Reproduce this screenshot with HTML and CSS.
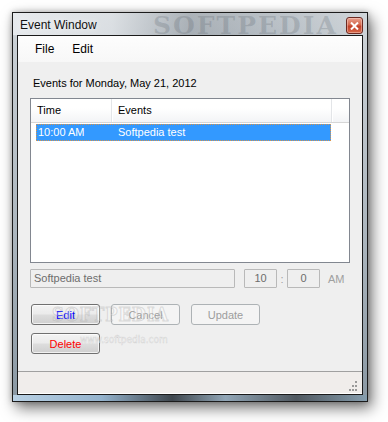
FILE: index.html
```html
<!DOCTYPE html>
<html>
<head>
<meta charset="utf-8">
<link rel="stylesheet" href="styles.css">
</head>
<body>
<div class="desktop">
  <div class="window">
    <div class="titlebar">
      <span class="title">Event Window</span>
      <span class="wm-title">SOFTPEDIA</span>
      <button class="close" aria-label="Close">
        <svg width="9" height="8" viewBox="0 0 9 8"><path d="M1 0.5 L8 7.5 M8 0.5 L1 7.5" stroke="#fff" stroke-width="2" fill="none"/></svg>
      </button>
    </div>
    <div class="client">
      <div class="menubar">
        <span class="menu-item">File</span>
        <span class="menu-item">Edit</span>
      </div>
      <div class="content">
        <div class="label">Events for Monday, May 21, 2012</div>
        <div class="listview">
          <div class="lv-header">
            <div class="col col-time">Time</div>
            <div class="col col-events">Events</div>
            <div class="col col-fill"></div>
          </div>
          <div class="lv-row selected">
            <div class="cell cell-time">10:00 AM</div>
            <div class="cell cell-events">Softpedia test</div>
          </div>
        </div>
        <div class="edit-row">
          <div class="textbox tb-name">Softpedia test</div>
          <div class="textbox tb-num">10</div>
          <span class="colon">:</span>
          <div class="textbox tb-num">0</div>
          <span class="ampm">AM</span>
        </div>
        <div class="btn-row">
          <button class="btn btn-edit">Edit</button>
          <button class="btn disabled">Cancel</button>
          <button class="btn disabled">Update</button>
        </div>
        <div class="btn-row second">
          <button class="btn btn-delete">Delete</button>
        </div>
        <span class="wm-big">SOFTPEDIA</span>
        <span class="wm-small">www.softpedia.com</span>
      </div>
      <div class="statusbar">
        <svg class="grip" width="10" height="10" viewBox="0 0 10 10">
          <rect x="7" y="0" width="2" height="2" fill="#9a9a9a"/>
          <rect x="4" y="4" width="2" height="2" fill="#9a9a9a"/>
          <rect x="7" y="4" width="2" height="2" fill="#9a9a9a"/>
          <rect x="1" y="8" width="2" height="2" fill="#9a9a9a"/>
          <rect x="4" y="8" width="2" height="2" fill="#9a9a9a"/>
          <rect x="7" y="8" width="2" height="2" fill="#9a9a9a"/>
        </svg>
      </div>
    </div>
  </div>
</div>
</body>
</html>
```
FILE: styles.css
```css
html, body {
  margin: 0;
  padding: 0;
  background: #ffffff;
}
body {
  width: 388px;
  height: 422px;
  overflow: hidden;
  font-family: "Liberation Sans", Arial, sans-serif;
  font-size: 11px;
  color: #000;
}
.desktop {
  padding: 12px 0 0 12px;
}
.window {
  width: 346px;
  height: 382px;
  border: 1px solid #1c1c1c;
  background:
    linear-gradient(90deg, rgba(190,215,235,0.9) 0%, rgba(150,185,215,0.8) 25%, rgba(30,35,40,0.7) 45%, rgba(150,175,195,0.6) 60%, rgba(40,45,50,0.6) 80%, rgba(130,160,180,0.6) 100%) bottom / 100% 6px no-repeat,
    linear-gradient(180deg, #d6dadd 0%, #c9cfd4 8%, #aab4bc 60%, #8a98a3 100%);
  box-shadow: 4px 6px 14px rgba(0,0,0,0.55), 0 0 6px rgba(0,0,0,0.25);
  display: flex;
  flex-direction: column;
  padding: 0 4px 6px 4px;
}
.titlebar {
  height: 22px;
  position: relative;
  display: flex;
  align-items: center;
  background: linear-gradient(90deg, rgba(232,235,238,0.95) 0%, rgba(222,226,230,0.7) 28%, rgba(110,120,130,0.4) 50%, rgba(150,160,170,0.4) 75%, rgba(205,211,216,0.6) 100%);
  margin: 0 -4px;
  padding: 0 4px;
}
.title {
  font-family: "Liberation Sans", Arial, sans-serif;
  font-size: 12px;
  color: #111;
  padding-left: 3px;
  padding-top: 1px;
  text-shadow: 0 0 6px rgba(255,255,255,0.9);
  position: relative;
  z-index: 1;
}
.wm-title {
  position: absolute;
  left: 140px;
  top: -2px;
  font-family: "DejaVu Serif", serif;
  font-weight: bold;
  font-size: 25px;
  letter-spacing: 2px;
  color: rgba(80,90,100,0.22);
  pointer-events: none;
}
.close {
  position: absolute;
  right: 4px;
  top: 4px;
  width: 17px;
  height: 17px;
  padding: 0;
  border: 1px solid #6b2a22;
  border-radius: 3px;
  background: linear-gradient(180deg, #e9a08e 0%, #d4694e 45%, #c2412a 55%, #d86a4a 100%);
  display: flex;
  align-items: center;
  justify-content: center;
  box-shadow: inset 0 0 0 1px rgba(255,220,210,0.45);
}
.client {
  flex: 1;
  border: 1px solid #1a1a1a;
  background: #efefef;
  display: flex;
  flex-direction: column;
  box-shadow: inset 0 -1px 0 #ffffff;
}
.menubar {
  height: 26px;
  display: flex;
  align-items: center;
  background: linear-gradient(180deg, #fdfdfd 0%, #f7f7f7 100%);
  padding-left: 17px;
  font-size: 12px;
}
.menu-item {
  margin-right: 18px;
  color: #000;
}
.content {
  flex: 1;
  position: relative;
  padding: 14px 12px 0 12px;
}
.label {
  padding-left: 3px;
  font-size: 11px;
  line-height: 14px;
  height: 14px;
}
.listview {
  margin-top: 8px;
  width: 318px;
  height: 163px;
  border: 1px solid #828790;
  background: #ffffff;
}
.lv-header {
  display: flex;
  height: 23px;
  background: linear-gradient(180deg, #ffffff 0%, #ffffff 40%, #f3f4f6 100%);
  border-bottom: 1px solid #d6d6d6;
}
.col {
  font-size: 11px;
  line-height: 23px;
  padding-left: 6px;
  border-right: 1px solid #e3e5e8;
  box-shadow: 1px 0 0 #ffffff;
}
.col-time { width: 74px; }
.col-events { width: 213px; }
.col-fill { flex: 1; border-right: none; box-shadow: none; }
.lv-row {
  display: flex;
  height: 17px;
  margin: 1px 0 0 5px;
  width: 295px;
  font-size: 11px;
  line-height: 17px;
}
.lv-row.selected {
  background: #3399ff;
  color: #ffffff;
  outline: 1px dotted #d9944a;
  outline-offset: -1px;
}
.cell-time { width: 80px; padding-left: 2px; }
.edit-row {
  display: flex;
  align-items: center;
  margin-top: 6px;
  height: 19px;
}
.textbox {
  height: 17px;
  border: 1px solid #b9b9b9;
  border-radius: 1px;
  background: #efefef;
  color: #6d6d6d;
  font-size: 11px;
  line-height: 17px;
}
.tb-name {
  width: 200px;
  padding-left: 3px;
}
.tb-num {
  width: 31px;
  text-align: center;
}
.tb-name + .tb-num { margin-left: 9px; }
.colon {
  width: 10px;
  text-align: center;
  color: #a0a0a0;
  font-size: 11px;
}
.ampm {
  margin-left: 8px;
  color: #a0a0a0;
  font-size: 11px;
}
.btn-row {
  display: flex;
  gap: 11px;
  margin-top: 16px;
  padding-left: 1px;
}
.btn-row.second { margin-top: 8px; }
.btn {
  width: 69px;
  height: 21px;
  padding: 0;
  font-family: "Liberation Sans", Arial, sans-serif;
  font-size: 11px;
  border: 1px solid #707070;
  border-radius: 3px;
  background: linear-gradient(180deg, #f3f3f3 0%, #ebebeb 48%, #dddddd 52%, #cfcfcf 100%);
  box-shadow: inset 0 0 0 1px rgba(255,255,255,0.7);
}
.btn-edit { color: #0000ff; }
.btn-delete { color: #ff0000; }
.btn.disabled {
  border-color: #adb2b5;
  background: #f4f4f4;
  color: #9d9d9d;
  box-shadow: none;
}
.wm-big {
  position: absolute;
  left: 34px;
  top: 242px;
  font-family: "DejaVu Serif Condensed", "DejaVu Serif", serif;
  font-weight: bold;
  font-size: 18px;
  letter-spacing: 1px;
  color: rgba(255,255,255,0.3);
  -webkit-text-stroke: 1px rgba(150,150,150,0.3);
  pointer-events: none;
}
.wm-small {
  position: absolute;
  left: 62px;
  top: 272px;
  font-family: "DejaVu Sans Condensed", "DejaVu Sans", sans-serif;
  font-size: 10px;
  color: rgba(255,255,255,0.7);
  -webkit-text-stroke: 0.5px rgba(150,150,150,0.35);
  pointer-events: none;
}
.statusbar {
  height: 21px;
  border-top: 1px solid #a0a0a0;
  background: #f0edeb;
  position: relative;
  margin-bottom: 1px;
}
.grip {
  position: absolute;
  right: 4px;
  bottom: 2px;
}
```
